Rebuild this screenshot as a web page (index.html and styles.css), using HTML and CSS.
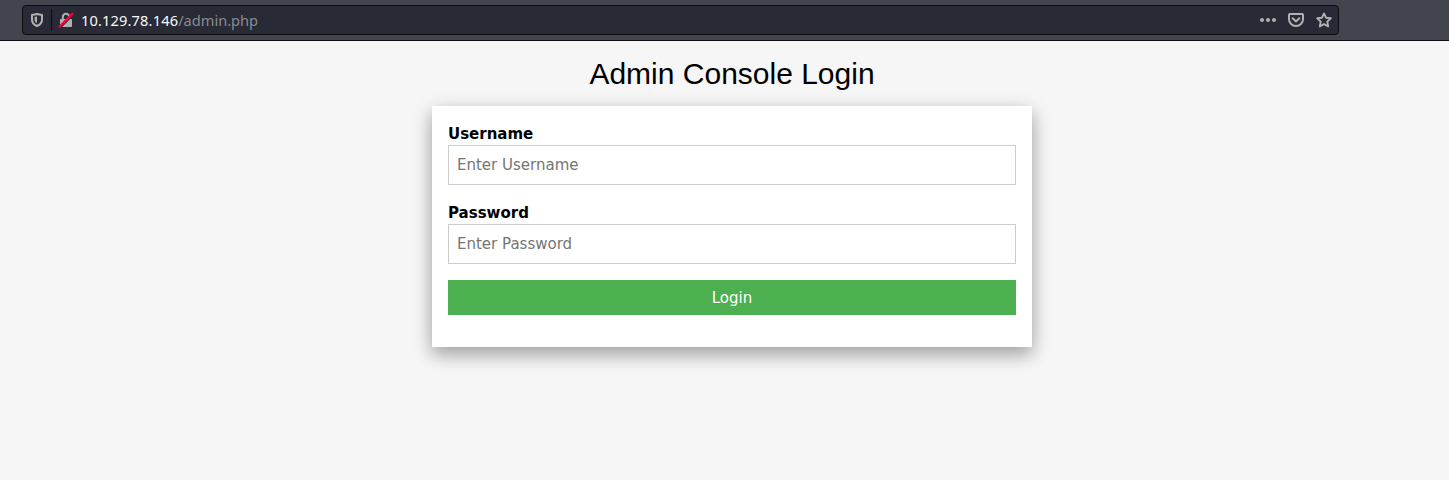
FILE: index.html
```html
<!DOCTYPE html>
<html lang="en">
<head>
<meta charset="utf-8">
<title>Admin Console Login</title>
<link rel="stylesheet" href="styles.css">
</head>
<body>
<header class="toolbar">
  <div class="urlbar">
    <svg class="icon shield" viewBox="0 0 16 16"><path d="M8 2 L13 3.1 V7.5 C13 10.5 11.2 12.8 8 14 C4.800 12.800 3 10.500 3 7.500 V3.100 Z" fill="none" stroke="#b1b1b3" stroke-width="2" stroke-linejoin="round"/><path d="M8 4.600V11.300C6.500 10.400 5.600 9.300 5.600 7.500V5.100Z" fill="#b1b1b3"/></svg>
    <span class="divider"></span>
    <svg class="icon lock" viewBox="0 0 16 16"><path d="M4.800 8V5A3.200 3.200 0 0 1 11.200 5V8" fill="none" stroke="#b1b1b3" stroke-width="2"/><rect x="2" y="7" width="12" height="8" rx="1" fill="#b1b1b3"/><path d="M2 15.800L15.400 2.400" stroke="#282a36" stroke-width="2"/><path d="M1.500 14.700L14.600 1.600" stroke="#f0033c" stroke-width="2.200" stroke-linecap="round"/></svg>
    <span class="address"><span class="host">10.129.78.146</span>/admin.php</span>
    <svg class="icon" viewBox="0 0 16 16"><g fill="#b1b1b3"><circle cx="2" cy="8" r="2"/><circle cx="8" cy="8" r="2"/><circle cx="14" cy="8" r="2"/></g></svg>
    <svg class="icon" viewBox="0 0 16 16"><path d="M2 2H14Q15 2 15 3V7.200A7 6.800 0 0 1 1 7.200V3Q1 2 2 2Z" fill="none" stroke="#b1b1b3" stroke-width="2"/><path d="M4.700 6.300L8 9.400L11.300 6.300" fill="none" stroke="#b1b1b3" stroke-width="2" stroke-linecap="round" stroke-linejoin="round"/></svg>
    <svg class="icon" viewBox="0 0 16 16"><path d="M8 1.500L10 5.700L14.800 6.300L11.300 9.600L12.200 14.400L8 12.100L3.800 14.400L4.700 9.600L1.200 6.300L6 5.700Z" fill="none" stroke="#b1b1b3" stroke-width="1.900" stroke-linejoin="round"/></svg>
  </div>
</header>
<main class="page">
  <h2 class="title">Admin Console Login</h2>
  <form class="card">
    <label class="label" for="user">Username</label>
    <input class="input" id="user" type="text" placeholder="Enter Username">
    <label class="label" for="pass">Password</label>
    <input class="input" id="pass" type="password" placeholder="Enter Password">
    <button class="button" type="button">Login</button>
  </form>
</main>
</body>
</html>
```
FILE: styles.css
```css
* { box-sizing: border-box; }

body {
  margin: 0;
  height: 480px;
  overflow: hidden;
  background: #f6f6f6;
  color: #000;
  font: 15px/24px "DejaVu Sans", sans-serif;
}

.toolbar {
  height: 41px;
  padding: 5px 0 0 22px;
  background: #42454d;
  border-bottom: 1px solid #0c0c0d;
}

.urlbar {
  display: flex;
  align-items: center;
  gap: 12px;
  width: 1317px;
  height: 30px;
  padding: 0 6px;
  background: #282a36;
  border: 1px solid #0c0c0d;
  border-radius: 4px;
}

.icon {
  flex: none;
  width: 16px;
  height: 16px;
}

.divider {
  width: 1px;
  height: 22px;
  margin: 0 -6px 0 -6px;
  background: #0c0c0d;
}

.address {
  flex: 1;
  margin-left: -5px;
  color: #8b8b90;
  font: 14.6px/28px "Noto Sans", sans-serif;
}

.host {
  color: #f9f9fa;
  letter-spacing: .15px;
}

.page {
  width: 600px;
  margin-left: 432px;
}

.title {
  margin: 0;
  padding-top: 10px;
  font: 400 30px/45px "Liberation Sans", Arial, sans-serif;
  text-align: center;
}

.card {
  height: 241px;
  margin-top: 10px;
  padding: 16px;
  background: #fff;
  box-shadow: 0 8px 16px 0 rgba(0, 0, 0, .2), 0 6px 20px 0 rgba(0, 0, 0, .19);
}

.label {
  display: block;
  height: 23px;
  font-weight: 700;
}

.input {
  display: block;
  width: 100%;
  height: 40px;
  margin-bottom: 16px;
  padding: 8px;
  border: 1px solid #ccc;
  background: #fff;
  font: 15px/22px "DejaVu Sans", sans-serif;
}

.input::placeholder {
  color: #757575;
  opacity: 1;
}

.button {
  display: block;
  width: 100%;
  height: 35px;
  padding: 1px 0 0;
  border: 0;
  background: #4caf50;
  color: #fff;
  font: 15px/34px "DejaVu Sans", sans-serif;
}
```
